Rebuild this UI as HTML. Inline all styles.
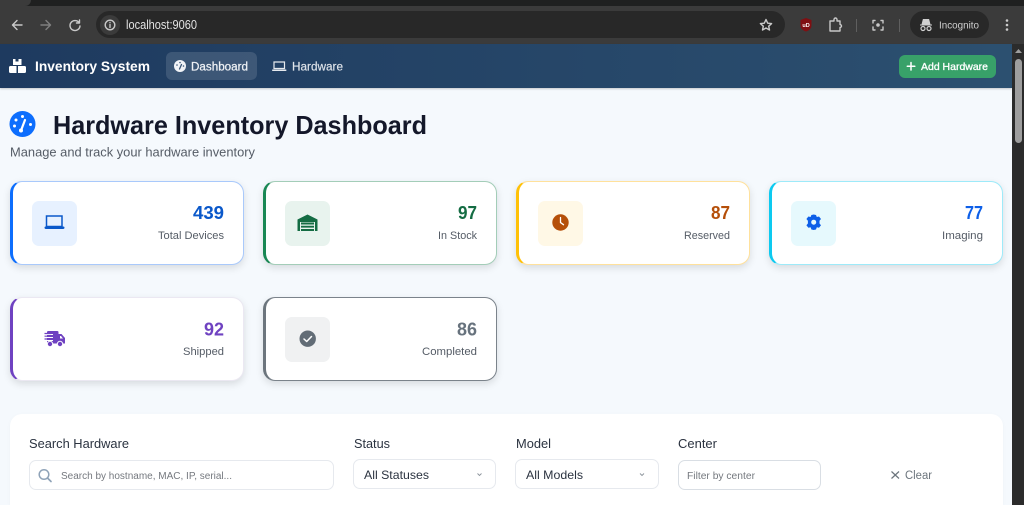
<!DOCTYPE html>
<html lang="en">
<head>
<meta charset="utf-8">
<title>Hardware Inventory Dashboard</title>
<style>
html,body{margin:0;padding:0;width:1024px;height:505px;overflow:hidden;background:#f5f9fd}
#page{position:relative;width:1024px;height:505px;overflow:hidden;background:#f5f9fd}
#page div{position:absolute;box-sizing:border-box}
svg{position:absolute;left:0;top:0}
text{font-family:"Liberation Sans",sans-serif}
.card{width:234px;height:84px;background:#fff;border-radius:12px;border:1px solid;border-left-width:3px;box-shadow:0 3px 8px rgba(0,0,0,.12)}
.ib{width:45px;height:45px;border-radius:7px}
.n{font-size:18px;font-weight:700;text-anchor:end}
.l{font-size:11px;fill:#555c66;text-anchor:end}
.f{font-size:12.5px;fill:#2b3340}
.inp{background:#fff;border:1px solid #e6e9ee;border-radius:7px}
</style>
</head>
<body>
<div id="page">
<div style="left:0;top:0;width:1024px;height:6px;background:#1f2020"></div>
<div style="left:0;top:0;width:31px;height:6px;background:#3b3b3b;border-radius:0 0 8px 0"></div>
<div style="left:0;top:6px;width:1024px;height:38px;background:#3b3b3b"></div>
<div style="left:96px;top:11px;width:689px;height:27px;background:#282828;border-radius:14px"></div>
<div style="left:100px;top:15px;width:20px;height:20px;background:#3b3b3b;border-radius:50%"></div>
<div style="left:910px;top:11px;width:79px;height:27px;background:#282828;border-radius:14px"></div>

<div style="left:0;top:44px;width:1012px;height:44px;background:linear-gradient(90deg,#1e3a5f,#2c5070);box-shadow:0 1px 2px rgba(0,0,0,.2)"></div>
<div style="left:166px;top:52px;width:91px;height:28px;background:rgba(255,255,255,.13);border-radius:6px"></div>
<div style="left:899px;top:55px;width:97px;height:23px;background:#38a169;border-radius:6px"></div>

<div class="card" style="left:10px;top:181px;border-color:#a9c9fb;border-left-color:#0d6efd"></div>
<div class="card" style="left:263px;top:181px;border-color:#a3cdb8;border-left-color:#198754"></div>
<div class="card" style="left:516px;top:181px;border-color:#ffe19c;border-left-color:#ffc107"></div>
<div class="card" style="left:769px;top:181px;border-color:#9eeaf9;border-left-color:#0dcaf0"></div>
<div class="card" style="left:10px;top:297px;border-color:#ebe8f2;border-left-color:#6f42c1"></div>
<div class="card" style="left:263px;top:297px;border-color:#7b838b;border-left-color:#6c757d"></div>

<div class="ib" style="left:32px;top:201px;background:#e7f1ff"></div>
<div class="ib" style="left:285px;top:201px;background:#e8f3ee"></div>
<div class="ib" style="left:538px;top:201px;background:#fff8e6"></div>
<div class="ib" style="left:791px;top:201px;background:#e6f9fd"></div>
<div class="ib" style="left:285px;top:317px;background:#f0f1f2"></div>

<div style="left:10px;top:414px;width:993px;height:91px;background:#fff;border-radius:12px 12px 0 0;box-shadow:0 1px 4px rgba(0,0,0,.03)"></div>
<div class="inp" style="left:29px;top:460px;width:305px;height:30px"></div>
<div class="inp" style="left:353px;top:459px;width:143px;height:30px"></div>
<div class="inp" style="left:515px;top:459px;width:144px;height:30px"></div>
<div class="inp" style="left:678px;top:460px;width:143px;height:30px;border-color:#d9dee4"></div>

<div style="left:1012px;top:44px;width:12px;height:461px;background:#2b2b2b"></div>
<div style="left:1015px;top:59px;width:7px;height:84px;background:#9e9e9e;border-radius:4px"></div>

<svg width="1024" height="505" viewBox="0 0 1024 505" xmlns="http://www.w3.org/2000/svg">
<!-- browser toolbar icons -->
<g fill="none" stroke="#c8c8c8" stroke-width="1.400" stroke-linecap="round" stroke-linejoin="round">
<path d="M22 25H13M17 20.500L12.500 25L17 29.500"/>
<path d="M41 25H50M46 20.500L50.500 25L46 29.500" stroke="#808080"/>
<path d="M79 22.500A5 5 0 1 0 80 26M79.500 20V23H76.500"/>
<circle cx="110" cy="25" r="4.800"/>
<path d="M110 24.500V27.500M110 22.500V22.600"/>
<path d="M766 19.500L767.700 23.200L771.600 23.600L768.700 26.200L769.500 30L766 28L762.500 30L763.300 26.200L760.400 23.600L764.300 23.200Z"/>
<path d="M830 21H834V19.500A1.500 1.500 0 0 1 837 19.500V21H840V24.500A1.500 1.500 0 0 1 840 27.500V31H830Z"/>
<path d="M873 23V20.500H875M881 20.500H883V23M883 27V30H881M875 30H873V27"/>
</g>
<path d="M800.500 20L806 18L811.500 20V25.500C811.500 28.500 809 30.500 806 31.500C803 30.500 800.500 28.500 800.500 25.500Z" fill="#800f12"/>
<text x="806" y="27" font-size="5.500" font-weight="700" fill="#fff" text-anchor="middle">uD</text>
<circle cx="878" cy="25" r="1.800" fill="#c8c8c8"/>
<path d="M856.500 19V32M899.500 19V32" stroke="#5f5f5f" stroke-width="1"/>
<path d="M920 25H932M922 24.500L923.300 19.500H928.700L930 24.500" fill="#d0d0d0" stroke="#d0d0d0" stroke-width="1"/>
<circle cx="923" cy="28.500" r="2" fill="none" stroke="#d0d0d0" stroke-width="1.200"/>
<circle cx="929" cy="28.500" r="2" fill="none" stroke="#d0d0d0" stroke-width="1.200"/>
<circle cx="1007" cy="20.500" r="1.300" fill="#ccc"/><circle cx="1007" cy="25" r="1.300" fill="#ccc"/><circle cx="1007" cy="29.500" r="1.300" fill="#ccc"/>
<path d="M1018.500 49L1022 53H1015Z" fill="#9e9e9e"/>
<text x="126" y="29" font-size="12.500" fill="#e3e3e3" textLength="71" lengthAdjust="spacingAndGlyphs">localhost:9060</text>
<text x="939" y="28.500" font-size="10.500" fill="#d0d0d0" textLength="40" lengthAdjust="spacingAndGlyphs">Incognito</text>

<!-- navbar -->
<path d="M9 67.500Q9 66 10.500 66H16.500V73H10.500Q9 73 9 71.500ZM18 66H24.500Q26 66 26 67.500V71.500Q26 73 24.500 73H18ZM13 59H15.500V61.500H18.500V59H21.500V65H13Z" fill="#fff"/>
<text x="35" y="71" font-size="14" font-weight="700" fill="#fff" textLength="115" lengthAdjust="spacingAndGlyphs">Inventory System</text>
<circle cx="180" cy="66" r="6" fill="#f2f4f7"/>
<path d="M179.500 69L181.500 64.500" stroke="#3a5676" stroke-width="1.300" stroke-linecap="round"/>
<circle cx="180" cy="62.500" r=".8" fill="#3a5676"/><circle cx="177" cy="65" r=".8" fill="#3a5676"/><circle cx="183.500" cy="66" r=".8" fill="#3a5676"/>
<text x="191" y="70.500" font-size="11.500" fill="#eef1f5" stroke="#eef1f5" stroke-width=".25" textLength="57" lengthAdjust="spacingAndGlyphs">Dashboard</text>
<path d="M274 62H284.500V68.500H274Z" fill="none" stroke="#e5e9ee" stroke-width="1.200"/>
<rect x="272" y="69.500" width="14.500" height="1.500" rx=".7" fill="#e5e9ee"/>
<text x="292" y="70.500" font-size="11.500" fill="#dfe4ea" stroke="#dfe4ea" stroke-width=".15" textLength="51" lengthAdjust="spacingAndGlyphs">Hardware</text>
<path d="M911 62.500V70M907.300 66.200H914.800" stroke="#fff" stroke-width="1.500" stroke-linecap="round"/>
<text x="921" y="70" font-size="10.500" fill="#fff" stroke="#fff" stroke-width=".3" textLength="67" lengthAdjust="spacingAndGlyphs">Add Hardware</text>

<!-- heading -->
<circle cx="22.500" cy="124" r="13" fill="#0d6efd"/>
<path d="M21 130.500L25 120" stroke="#fff" stroke-width="2.200" stroke-linecap="round"/>
<circle cx="21" cy="130.500" r="2" fill="#fff"/>
<circle cx="22.500" cy="116.500" r="1.500" fill="#fff"/><circle cx="16" cy="120" r="1.500" fill="#fff"/><circle cx="14.500" cy="126" r="1.500" fill="#fff"/><circle cx="30.500" cy="124.500" r="1.500" fill="#fff"/>
<text x="53" y="134" font-size="26" font-weight="700" fill="#14182a" textLength="374" lengthAdjust="spacingAndGlyphs">Hardware Inventory Dashboard</text>
<text x="10" y="156.500" font-size="12.500" fill="#555c66" textLength="245" lengthAdjust="spacingAndGlyphs">Manage and track your hardware inventory</text>

<!-- stat cards -->
<path d="M46.500 216H62V226.500H46.500Z" fill="none" stroke="#0a58ca" stroke-width="1.500"/>
<rect x="44.500" y="226.500" width="20" height="2.500" rx="1.200" fill="#0a58ca"/>
<text class="n" x="224" y="219" fill="#0a58ca" textLength="31" lengthAdjust="spacingAndGlyphs">439</text>
<text class="l" x="224" y="239" textLength="66" lengthAdjust="spacingAndGlyphs">Total Devices</text>

<path d="M297.500 231V219.500L307.500 214.500L317.500 219.500V231H315V222H300V231Z" fill="#146c43"/>
<path d="M301 222.500H314V224.500H301ZM301 225.800H314V227.600H301ZM301 229H314V231H301Z" fill="#146c43"/>
<text class="n" x="477" y="219" fill="#146c43" textLength="19" lengthAdjust="spacingAndGlyphs">97</text>
<text class="l" x="477" y="239" textLength="39" lengthAdjust="spacingAndGlyphs">In Stock</text>

<circle cx="560.500" cy="222.500" r="8.200" fill="#b54f09"/>
<path d="M560.500 217.500V222.500L563.500 224.700" fill="none" stroke="#fff" stroke-width="1.300" stroke-linecap="round"/>
<text class="n" x="730" y="219" fill="#b54f09" textLength="19" lengthAdjust="spacingAndGlyphs">87</text>
<text class="l" x="730" y="239" textLength="46" lengthAdjust="spacingAndGlyphs">Reserved</text>

<path d="M813.700 214.500L816 215L816.800 217L819 216.500L821 219L819.500 220.800V223.500L821 225.300L819 227.800L816.800 227.300L816 229.500L813.700 230L811.400 229.500L810.600 227.300L808.400 227.800L806.400 225.300L807.900 223.500V220.800L806.400 219L808.400 216.500L810.600 217L811.400 215Z" fill="#0d5fe8"/>
<circle cx="813.700" cy="222.200" r="2.500" fill="#e6f9fd"/>
<text class="n" x="983" y="219" fill="#0d5fe8" textLength="18" lengthAdjust="spacingAndGlyphs">77</text>
<text class="l" x="983" y="239" textLength="41" lengthAdjust="spacingAndGlyphs">Imaging</text>

<rect x="47" y="331" width="11.500" height="12.500" rx="1.200" fill="#6f42c1"/>
<path d="M58 334H61.500L65 338V343.500H58Z" fill="#6f42c1"/>
<path d="M47 334.500H53M47 337.500H53M47 340.500H53" stroke="#fff" stroke-width="1"/>
<path d="M44.500 333.500H51M44.500 336.200H51M44.500 339H51" stroke="#6f42c1" stroke-width="1.200"/>
<path d="M60 336V338.500H63L61 336Z" fill="#fff"/>
<circle cx="50" cy="344" r="2.700" fill="#6f42c1" stroke="#fff"/><circle cx="60" cy="344" r="2.700" fill="#6f42c1" stroke="#fff"/>
<text class="n" x="224" y="335.500" fill="#6f42c1" textLength="20" lengthAdjust="spacingAndGlyphs">92</text>
<text class="l" x="224" y="355" textLength="41" lengthAdjust="spacingAndGlyphs">Shipped</text>

<circle cx="307.700" cy="338.700" r="8.200" fill="#626c76"/>
<path d="M304 339L306.700 341.500L311.500 336.500" fill="none" stroke="#fff" stroke-width="1.500" stroke-linecap="round" stroke-linejoin="round"/>
<text class="n" x="477" y="335.500" fill="#67727d" textLength="20" lengthAdjust="spacingAndGlyphs">86</text>
<text class="l" x="477" y="355" textLength="55" lengthAdjust="spacingAndGlyphs">Completed</text>

<!-- filters -->
<text class="f" x="29" y="448" textLength="100" lengthAdjust="spacingAndGlyphs">Search Hardware</text>
<text class="f" x="354" y="448" textLength="36" lengthAdjust="spacingAndGlyphs">Status</text>
<text class="f" x="516" y="448" textLength="35" lengthAdjust="spacingAndGlyphs">Model</text>
<text class="f" x="678" y="448" textLength="39" lengthAdjust="spacingAndGlyphs">Center</text>
<circle cx="44" cy="474.500" r="4.800" fill="none" stroke="#8fa3b8" stroke-width="1.500"/>
<path d="M47.500 478L51 481.500" stroke="#8fa3b8" stroke-width="1.700" stroke-linecap="round"/>
<text x="61" y="479" font-size="10" fill="#75797f" textLength="171" lengthAdjust="spacingAndGlyphs">Search by hostname, MAC, IP, serial...</text>
<text x="364" y="479" font-size="12" fill="#2b3340" textLength="65" lengthAdjust="spacingAndGlyphs">All Statuses</text>
<path d="M477.500 473.500L479.500 475.500L481.500 473.500" fill="none" stroke="#8a929a" stroke-width=".9"/>
<text x="526" y="479" font-size="12" fill="#2b3340" textLength="57" lengthAdjust="spacingAndGlyphs">All Models</text>
<path d="M640 473.500L642 475.500L644 473.500" fill="none" stroke="#8a929a" stroke-width=".9"/>
<text x="687" y="479" font-size="10" fill="#75797f" textLength="68" lengthAdjust="spacingAndGlyphs">Filter by center</text>
<path d="M891.500 471.500L899 478.500M899 471.500L891.500 478.500" stroke="#6c757d" stroke-width="1.200"/>
<text x="905" y="479" font-size="11.500" fill="#6c757d" textLength="27" lengthAdjust="spacingAndGlyphs">Clear</text>
</svg>
</div>
</body>
</html>
